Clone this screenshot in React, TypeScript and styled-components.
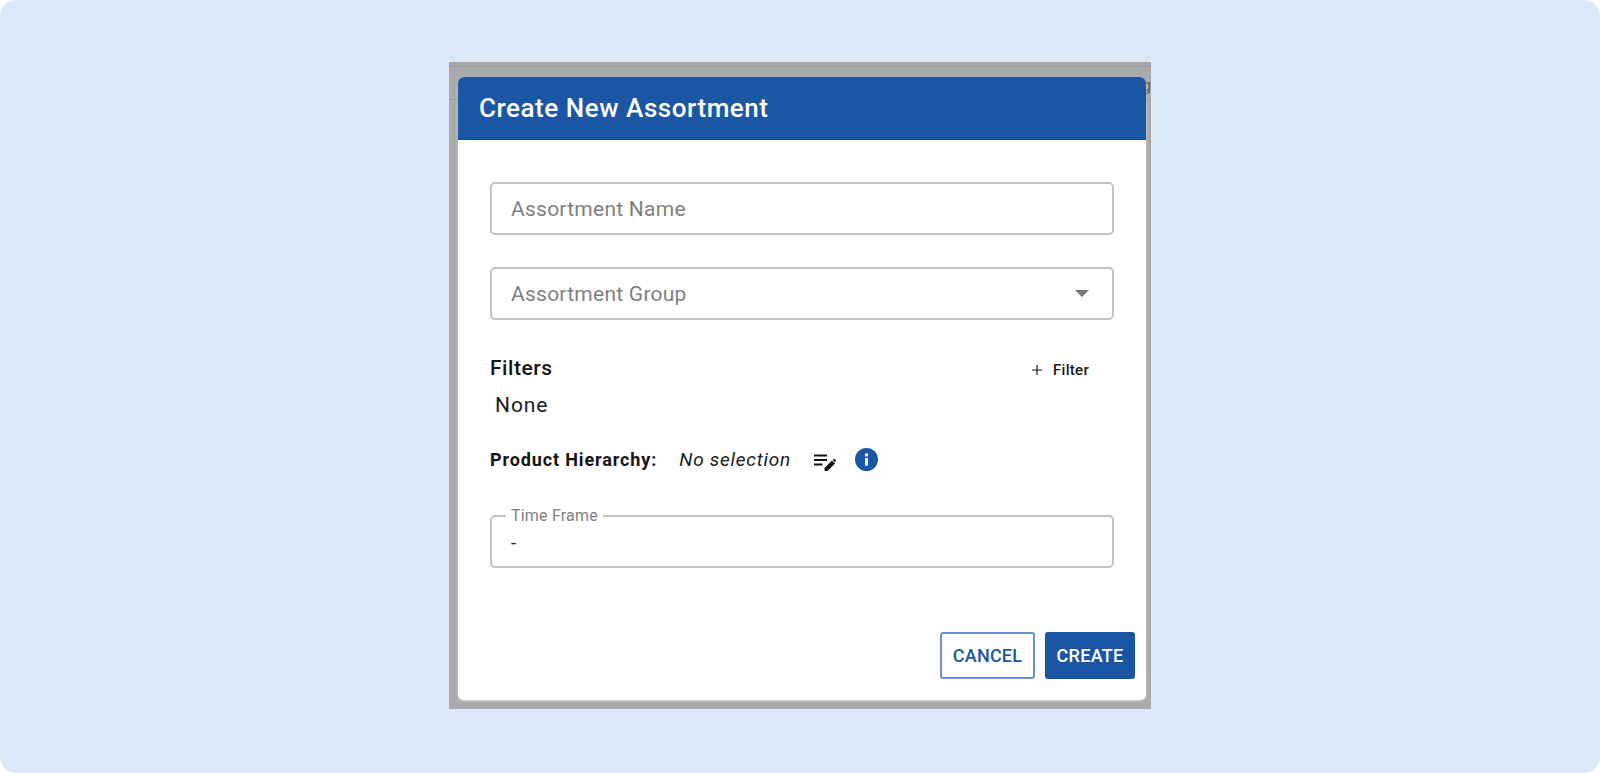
import React from "react";
import styled, { createGlobalStyle } from "styled-components";

const GlobalStyle = createGlobalStyle`
  html, body {
    margin: 0;
    padding: 0;
    background: #fff;
  }
  * {
    box-sizing: border-box;
  }
`;

const App = () => {
  return (
    <S.Page>
      <GlobalStyle />
      <S.Backdrop>
        <S.BehindBar>
          <S.BehindText>g</S.BehindText>
        </S.BehindBar>
        <S.Dialog>
          <S.Header>Create New Assortment</S.Header>
          <S.Body>
            <S.Field>
              <S.Placeholder>Assortment Name</S.Placeholder>
            </S.Field>
            <S.Field>
              <S.Placeholder>Assortment Group</S.Placeholder>
              <S.Caret />
            </S.Field>
            <S.FilterRow>
              <S.FilterTitle>Filters</S.FilterTitle>
              <S.AddFilter>
                <svg width="12" height="12" viewBox="0 0 12 12">
                  <path d="M6 1v10M1 6h10" stroke="#1a1a1a" strokeWidth="1.2" />
                </svg>
                Filter
              </S.AddFilter>
            </S.FilterRow>
            <S.NoneText>None</S.NoneText>
            <S.HierarchyRow>
              <S.HierarchyLabel>Product Hierarchy:</S.HierarchyLabel>
              <S.HierarchyValue>No selection</S.HierarchyValue>
              <S.EditIcon viewBox="0 0 24 24">
                <path d="M2 7.5h13v1.9H2zM2 12h13v1.9H2zM2 16.5h8.5v1.9H2z" fill="#111" />
                <path d="M12.5 24v-3l7.5-7.5 3 3-7.5 7.5zM20.8 12.7l1.2-1.2 2 2-1.2 1.9z" fill="#111" />
              </S.EditIcon>
              <S.InfoIcon viewBox="0 0 24 24">
                <circle cx="12" cy="12" r="12" fill="#1b56a5" />
                <rect x="10.5" y="10.5" width="3" height="8" fill="#fff" />
                <rect x="10.5" y="5.8" width="3" height="3" fill="#fff" />
              </S.InfoIcon>
            </S.HierarchyRow>
            <S.TimeField>
              <S.Legend>Time Frame</S.Legend>
              <S.TimeValue>-</S.TimeValue>
            </S.TimeField>
          </S.Body>
          <S.Footer>
            <S.CancelButton>CANCEL</S.CancelButton>
            <S.CreateButton>CREATE</S.CreateButton>
          </S.Footer>
        </S.Dialog>
      </S.Backdrop>
    </S.Page>
  );
};

export default App;

const S = {
  Page: styled.div`
    width: 1600px;
    height: 773px;
    background-color: #dbe8f9;
    border-radius: 16px;
    display: flex;
    justify-content: center;
    padding-top: 62px;
    font-family: Roboto, "Liberation Sans", sans-serif;
  `,
  Backdrop: styled.div`
    position: relative;
    width: 702px;
    height: 647px;
    background-color: #ababab;
    border-top: 4px solid #a8a8a8;
    padding: 11px 5px 9px 9px;
  `,
  BehindBar: styled.div`
    position: absolute;
    left: 0;
    right: 0;
    top: 0;
    height: 34px;
    border-top: 1px solid #9c9c9c;
    border-bottom: 1px solid #9c9c9c;
    overflow: hidden;
  `,
  BehindText: styled.span`
    position: absolute;
    right: 0;
    top: 9px;
    font-size: 16px;
    color: #5c5c5c;
  `,
  Dialog: styled.div`
    position: relative;
    height: 100%;
    background-color: #fff;
    border-radius: 6px;
    overflow: hidden;
    display: flex;
    flex-direction: column;
    box-shadow: 0 1px 2px #dcdcdc;
  `,
  Header: styled.div`
    height: 63px;
    padding-left: 21px;
    display: flex;
    align-items: center;
    background-color: #1b56a5;
    border-bottom: 1px solid #0f4fa0;
    color: #fff;
    font-size: 26px;
    font-weight: 500;
    letter-spacing: 0.55px;
  `,
  Body: styled.div`
    flex: 1;
    padding: 42px 32px 0 32px;
  `,
  Field: styled.div`
    position: relative;
    height: 53px;
    margin-bottom: 32px;
    padding: 0 19px;
    display: flex;
    align-items: center;
    justify-content: space-between;
    border: 2px solid #c2c2c2;
    border-radius: 5px;
  `,
  Placeholder: styled.span`
    color: #7f7f7f;
    font-size: 21px;
    letter-spacing: 0.25px;
  `,
  Caret: styled.span`
    width: 0;
    height: 0;
    margin-right: 4px;
    border-left: 7.5px solid transparent;
    border-right: 7.5px solid transparent;
    border-top: 7px solid #757575;
  `,
  FilterRow: styled.div`
    display: flex;
    justify-content: space-between;
    align-items: center;
    height: 32px;
  `,
  FilterTitle: styled.span`
    color: #141414;
    font-size: 21px;
    font-weight: 500;
    letter-spacing: 0.55px;
  `,
  AddFilter: styled.span`
    display: flex;
    align-items: center;
    gap: 10px;
    margin-right: 25px;
    margin-top: 3px;
    color: #1a1a1a;
    font-size: 15px;
    font-weight: 500;
    letter-spacing: 0.3px;
  `,
  NoneText: styled.div`
    margin-top: 6px;
    padding-left: 5px;
    color: #1a1a1a;
    font-size: 21px;
    letter-spacing: 0.9px;
    line-height: 30px;
  `,
  HierarchyRow: styled.div`
    display: flex;
    align-items: center;
    margin-top: 24px;
    height: 30px;
  `,
  HierarchyLabel: styled.span`
    color: #141414;
    font-size: 18px;
    font-weight: 700;
    letter-spacing: 0.88px;
  `,
  HierarchyValue: styled.span`
    margin-left: 22px;
    color: #1a1a1a;
    font-size: 19px;
    font-style: italic;
    letter-spacing: 0.75px;
  `,
  EditIcon: styled.svg`
    width: 24px;
    height: 24px;
    margin-left: 21px;
  `,
  InfoIcon: styled.svg`
    width: 23px;
    height: 23px;
    margin-left: 19px;
  `,
  TimeField: styled.div`
    position: relative;
    height: 53px;
    margin-top: 41px;
    padding: 15px 19px 0;
    border: 2px solid #c2c2c2;
    border-radius: 5px;
  `,
  Legend: styled.span`
    position: absolute;
    left: 14px;
    top: -11px;
    padding: 0 5px;
    background-color: #fff;
    color: #7f7f7f;
    font-size: 16px;
    letter-spacing: 0.2px;
  `,
  TimeValue: styled.span`
    color: #222;
    font-size: 18px;
  `,
  Footer: styled.div`
    display: flex;
    justify-content: flex-end;
    gap: 10px;
    padding: 0 11px 21px 0;
  `,
  CancelButton: styled.button`
    width: 95px;
    height: 47px;
    background-color: #fff;
    border: 2px solid #6a93c8;
    border-radius: 3px;
    color: #1b56a5;
    font-family: inherit;
    font-size: 18px;
    font-weight: 500;
    letter-spacing: 0.2px;
    padding: 0;
  `,
  CreateButton: styled.button`
    width: 90px;
    height: 47px;
    background-color: #1b56a5;
    border: none;
    border-radius: 3px;
    color: #fff;
    font-family: inherit;
    font-size: 18px;
    font-weight: 500;
    letter-spacing: 0.3px;
    padding: 0;
  `,
};
